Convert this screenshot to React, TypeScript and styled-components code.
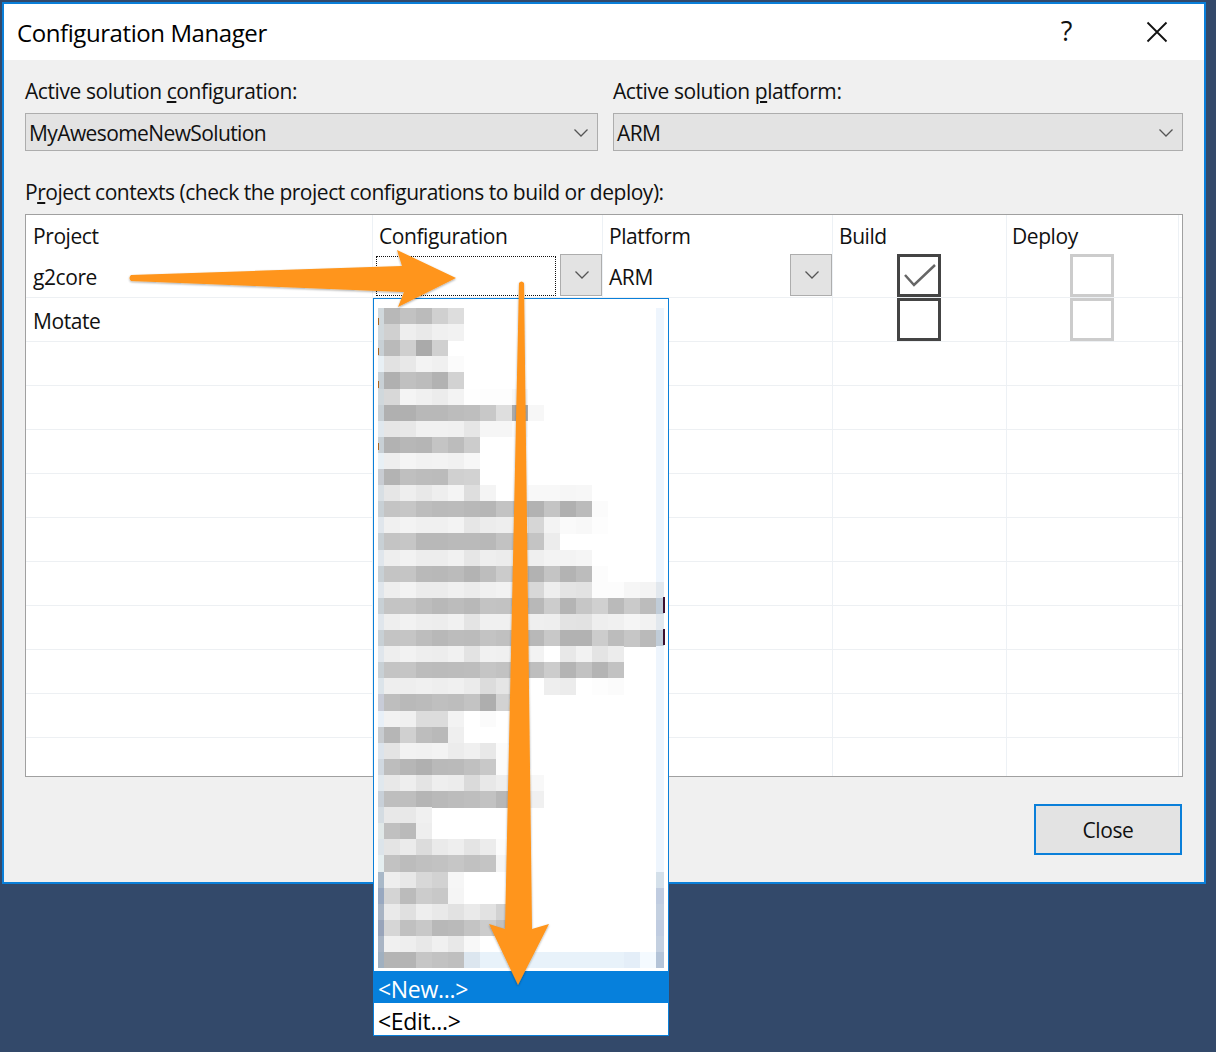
import styled, { createGlobalStyle } from "styled-components";

const FONT = `"Open Sans", "Noto Sans", "Liberation Sans", sans-serif`;
const BLUE = "#0a7fd9";

const GlobalStyle = createGlobalStyle`
  html, body {
    margin: 0;
    padding: 0;
    background: #33496a;
  }
  body {
    font-family: ${FONT};
    font-size: 21px;
    letter-spacing: -0.42px;
    color: #111;
  }
`;

const Page = styled.div`
  position: relative;
  width: 1216px;
  height: 1052px;
  padding: 2px;
  box-sizing: border-box;
  overflow: hidden;
`;

const Window = styled.div`
  width: 1204px;
  height: 882px;
  box-sizing: border-box;
  border: 2px solid ${BLUE};
  background: #f0f0f0;
  display: flex;
  flex-direction: column;
`;

const TitleBar = styled.div`
  height: 56px;
  flex: none;
  background: #fff;
  display: flex;
  align-items: center;
  padding: 0 36px 0 13px;
  box-sizing: border-box;
`;

const Title = styled.div`
  flex: 1;
  font-size: 24px;
  letter-spacing: -0.42px;
  color: #000;
`;

const HelpMark = styled.span`
  font-size: 27px;
  line-height: 1;
  margin-right: 74px;
  margin-top: -4px;
`;

const Body = styled.div`
  flex: 1;
  padding: 17px 21px 0;
  display: flex;
  flex-direction: column;
`;

const Fields = styled.div`
  display: grid;
  grid-template-columns: 573px 570px;
  column-gap: 15px;
`;

const Label = styled.div`
  height: 28px;
  line-height: 28px;
  white-space: nowrap;
`;

const Combo = styled.div`
  height: 38px;
  margin-top: 8px;
  box-sizing: border-box;
  border: 1px solid #adadad;
  background: #e3e3e3;
  display: flex;
  align-items: center;
  justify-content: space-between;
  padding: 2px 8px 0 3px;
  letter-spacing: -0.6px;
`;

const ContextLabel = styled(Label)`
  margin-top: 27px;
  letter-spacing: -0.48px;
`;

const Table = styled.div`
  height: 563px;
  margin-top: 8px;
  box-sizing: border-box;
  border: 1px solid #a0a0a0;
  background: #fff;
  display: flex;
  flex-direction: column;
`;

const Row = styled.div<{ $h: number; $line?: boolean; $grow?: boolean }>`
  display: grid;
  grid-template-columns: 347px 230px 230px 174px 172px 1fr;
  height: ${(p) => p.$h}px;
  flex: ${(p) => (p.$grow ? "1" : "none")};
  box-sizing: border-box;
  border-bottom: ${(p) => (p.$line ? "1px solid #edf0f3" : "none")};
`;

const Cell = styled.div<{ $pad?: number; $center?: boolean; $last?: boolean }>`
  box-sizing: border-box;
  border-right: ${(p) => (p.$last ? "none" : "1px solid #edf1f5")};
  padding-left: ${(p) => p.$pad ?? 0}px;
  padding-top: 3px;
  display: flex;
  align-items: center;
  justify-content: ${(p) => (p.$center ? "center" : "flex-start")};
  min-width: 0;
`;

const CheckCell = styled(Cell)`
  padding-right: 2px;
`;

const FocusBox = styled.div`
  width: 180px;
  height: 40px;
  margin-left: 3px;
  margin-top: -3px;
  box-sizing: border-box;
  border: 1px dotted #111;
`;

const CellButton = styled.div`
  width: 42px;
  height: 42px;
  margin-left: auto;
  margin-top: -5px;
  box-sizing: border-box;
  border: 1px solid #adadad;
  background: #e3e3e3;
  display: flex;
  align-items: center;
  justify-content: center;
  padding-left: 1px;
`;

const Check = styled.div<{ $disabled?: boolean }>`
  width: 44px;
  height: 43px;
  margin-top: -4px;
  box-sizing: border-box;
  border: 3px solid ${(p) => (p.$disabled ? "#cccccc" : "#444444")};
  display: flex;
  align-items: center;
  justify-content: center;
`;

const Footer = styled.div`
  display: flex;
  justify-content: flex-end;
  padding: 27px 1px 0 0;
`;

const CloseButton = styled.div`
  width: 148px;
  height: 51px;
  box-sizing: border-box;
  border: 2px solid ${BLUE};
  background: #e3e3e3;
  display: flex;
  align-items: center;
  justify-content: center;
  padding-top: 1px;
`;

const Dropdown = styled.div`
  position: absolute;
  left: 373px;
  top: 298px;
  width: 296px;
  height: 738px;
  box-sizing: border-box;
  border: 1px solid ${BLUE};
  background: #fff;
  display: flex;
  flex-direction: column;
`;

const BlurredList = styled.div`
  height: 672px;
  flex: none;
  padding: 9px 0 0 4px;
  box-sizing: border-box;
`;

const Option = styled.div<{ $active?: boolean }>`
  height: 32px;
  flex: none;
  padding: 3px 0 0 4px;
  box-sizing: border-box;
  display: flex;
  align-items: center;
  font-size: 23px;
  letter-spacing: -0.3px;
  color: ${(p) => (p.$active ? "#fff" : "#000")};
  background: ${(p) => (p.$active ? "#0680dc" : "#fff")};
`;

const Overlay = styled.svg`
  position: absolute;
  left: 0;
  top: 0;
  pointer-events: none;
`;

const Chevron = () => (
  <svg width="16" height="10" viewBox="0 0 16 10">
    <path d="M1.5 1.5 L8 8 L14.5 1.5" fill="none" stroke="#555" strokeWidth="1.3" />
  </svg>
);

const CloseIcon = () => (
  <svg width="22" height="22" viewBox="0 0 22 22">
    <path d="M1.5 1.5 L20.5 20.5 M20.5 1.5 L1.5 20.5" fill="none" stroke="#111" strokeWidth="1.8" />
  </svg>
);

const CheckIcon = () => (
  <svg width="34" height="30" viewBox="0 0 34 30">
    <path d="M3 15 L12 25 L33 5" fill="none" stroke="#666" strokeWidth="2.5" />
  </svg>
);

// pixelated rows of the covered list: first value is the 6px edge column, then 16px cells
const RAIL = "eef5fd";
const mosaic: [string, string?][] = [
  ["d0d8dc b8 c2 bb d0 dd"],
  ["d0d8dc d0 ee e9 f0 f2"],
  ["c8d0d5 ba cf aa d0"],
  ["e8f0f5 e2 e8 f3 f0 fb"],
  ["c8d0d5 b0 c0 bc b2 d2"],
  ["d0d8dc d8 f4 f0 ec f3 fe fd fd f8"],
  ["c8d0d5 b0 b0 b8 b8 bc be c8 de aa f7"],
  ["e0e8ee e6 e8 f1 f1 f0 e6 f6 f6 fa"],
  ["c8d0d5 b2 b7 b5 c4 bc cc"],
  ["e8f0f5 ee f5 f2 f3 f1 f7"],
  ["c8ccd2 b3 bf bc bb d0 d2"],
  ["d8dfe4 e6 ee e8 ee f4 de f4 ff ff f8 f8 f6 f7"],
  ["c8d0d5 c4 c6 bd ba bb b8 b6 c3 c5 b2 c4 b0 bb fb"],
  ["e0e6ec f0 f3 f0 f0 f3 e6 ec ee f0 d6 f3 fa f8 fd"],
  ["c8d0d5 c4 c6 b8 b8 ba ba b8 c2 c5 c4 ec"],
  ["e0e6ec ee f2 ed ed f1 e6 ee ec f5 ef f3 f3 f5"],
  ["c8d0d5 c4 c5 b9 b8 bb b3 bd cb c5 b2 c4 b3 bc fc"],
  ["e0e6ec ee f3 ec ec f0 ec f0 f2 f3 d8 ee e4 e2 fc fc f6 f4", "e2e8ee"],
  ["c8d0d5 c4 c4 bd b8 bc b8 c3 c2 c0 b8 cc b4 c6 d0 ba ca bc", "c0ccd8"],
  ["e0e6ec ee f2 ee ed f1 e4 f0 f0 f3 ef ee e3 e2 ee f0 f5 f2", "e2e8ee"],
  ["c8d0d5 c4 c5 bd b8 bc bb c3 c0 c0 b8 c8 b2 b2 cc bc c6 ba", "c0ccd8"],
  ["e0e6ec ee f2 ee ed f1 e3 f1 f0 f3 f3 ff e8 f2 e4 ec"],
  ["c8d0d5 c4 c5 bc bb bc bd c5 c2 c0 be cc b4 c2 b4 c2"],
  ["dce4ea ee ee f0 ee f0 eb dc e5 f0 ff ee ec ff fd fb"],
  ["c8ccd8 be b9 bb bf bd c3 ae d2 e0"],
  ["e8f0f8 f2 f0 dc dc f3 ff fb"],
  ["c8ccd0 b6 d0 bd b9 ef"],
  ["dce4ec e4 f2 f1 f3 ec f0 e8 fb"],
  ["d0d8e0 bd b6 b0 b9 ba c0 c8 fb"],
  ["e0e8ee e8 ee e4 ee ec da e8 ee f6 f8"],
  ["c8d0d8 be be b5 b9 bc be c2 b7 d8 f0"],
  ["d4dce2 e8 e8 f0"],
  ["e0e8e8 c0 ba ee"],
  ["dce4ea e4 eb dc ea ee e4 ec fc"],
  ["e4eef0 c2 bc c0 c2 c6 c1 c4 f5"],
  ["a8b8c8 ee e8 d8 d2 f6", "d4e0ea"],
  ["98a8c0 d4 bb cc c8 f5", "c0cce0"],
  ["a8b4c4 ea e0 ee e9 e2 ea e2 d2", "c4d0e0"],
  ["98a4ba d6 c0 c8 b8 ba c4 cc c0 f6", "c0cce0"],
  ["a8b4c4 f0 ee e8 f0 e8 f8", "c4d0e0"],
  ["a0b0c0 b4 b4 c6 c2 bf dce6ef e8f2fa e8f2fa e8f2fa e8f2fa e8f2fa e8f2fa e8f2fa e8f2fa e8f2fa e4eef8 f4faff", "b4c4d8"],
];

const toColor = (v: string) => (v.length === 2 ? `#${v}${v}${v}` : `#${v}`);

const Mosaic = () => (
  <svg width="290" height="660" viewBox="0 0 290 660" shapeRendering="crispEdges">
    <rect x="6" y="-1" width="278" height="1" fill="#eef1f4" />
    {mosaic.map(([cells, rail], r) => (
      <g key={r}>
        {cells.split(" ").map((v, c) => (
          <rect
            key={c}
            x={c === 0 ? 0 : 6 + (c - 1) * 16}
            y={r * 16.1}
            width={c === 0 ? 6 : 16}
            height={16.5}
            fill={toColor(v)}
          />
        ))}
        <rect x="278" y={r * 16.1} width="8" height="16.5" fill={toColor(rail ?? RAIL)} />
      </g>
    ))}
    {[10, 40, 73, 135].map((y) => (
      <rect key={y} x="-1" y={y} width="2" height="7" fill="#a8641e" />
    ))}
    {[289, 321].map((y) => (
      <rect key={y} x="285" y={y} width="2" height="16" fill="#3a1030" />
    ))}
  </svg>
);

const Arrows = () => (
  <Overlay width="1216" height="1052" viewBox="0 0 1216 1052">
    <defs>
      <filter id="arrowShadow" x="-10%" y="-10%" width="120%" height="120%">
        <feDropShadow dx="0" dy="1" stdDeviation="1.2" floodColor="#000" floodOpacity="0.35" />
      </filter>
    </defs>
    <g fill="#ff951a" filter="url(#arrowShadow)">
      <path d="M131 275 L402 266 L397 250 L456 278 L398 307 L404 292 L131 281 Q128 278 131 275 Z" />
      <path d="M519 283 Q521.5 280 524 283 L532 929 L549 924 L518 985 L489 924 L505 929 Z" />
    </g>
  </Overlay>
);

export default function App() {
  return (
    <Page>
      <GlobalStyle />
      <Window>
        <TitleBar>
          <Title>Configuration Manager</Title>
          <HelpMark>?</HelpMark>
          <CloseIcon />
        </TitleBar>
        <Body>
          <Fields>
            <div>
              <Label>
                Active solution <u>c</u>onfiguration:
              </Label>
              <Combo>
                MyAwesomeNewSolution
                <Chevron />
              </Combo>
            </div>
            <div>
              <Label>
                Active solution <u>p</u>latform:
              </Label>
              <Combo>
                ARM
                <Chevron />
              </Combo>
            </div>
          </Fields>
          <ContextLabel>
            P<u>r</u>oject contexts (check the project configurations to build or deploy):
          </ContextLabel>
          <Table>
            <Row $h={39}>
              <Cell $pad={7}>Project</Cell>
              <Cell $pad={6}>Configuration</Cell>
              <Cell $pad={6}>Platform</Cell>
              <Cell $pad={6}>Build</Cell>
              <Cell $pad={5}>Deploy</Cell>
              <Cell $last />
            </Row>
            <Row $h={44} $line>
              <Cell $pad={7}>g2core</Cell>
              <Cell>
                <FocusBox />
                <CellButton>
                  <Chevron />
                </CellButton>
              </Cell>
              <Cell $pad={6}>
                ARM
                <CellButton>
                  <Chevron />
                </CellButton>
              </Cell>
              <CheckCell $center>
                <Check>
                  <CheckIcon />
                </Check>
              </CheckCell>
              <CheckCell $center>
                <Check $disabled />
              </CheckCell>
              <Cell $last />
            </Row>
            <Row $h={44} $line>
              <Cell $pad={7}>Motate</Cell>
              <Cell />
              <Cell />
              <CheckCell $center>
                <Check />
              </CheckCell>
              <CheckCell $center>
                <Check $disabled />
              </CheckCell>
              <Cell $last />
            </Row>
            {Array.from({ length: 9 }, (_, i) => (
              <Row key={i} $h={44} $line>
                <Cell />
                <Cell />
                <Cell />
                <Cell />
                <Cell />
                <Cell $last />
              </Row>
            ))}
            <Row $h={38} $grow>
              <Cell />
              <Cell />
              <Cell />
              <Cell />
              <Cell />
              <Cell $last />
            </Row>
          </Table>
          <Footer>
            <CloseButton>Close</CloseButton>
          </Footer>
        </Body>
      </Window>
      <Dropdown>
        <BlurredList>
          <Mosaic />
        </BlurredList>
        <Option $active>&lt;New...&gt;</Option>
        <Option>&lt;Edit...&gt;</Option>
      </Dropdown>
      <Arrows />
    </Page>
  );
}
